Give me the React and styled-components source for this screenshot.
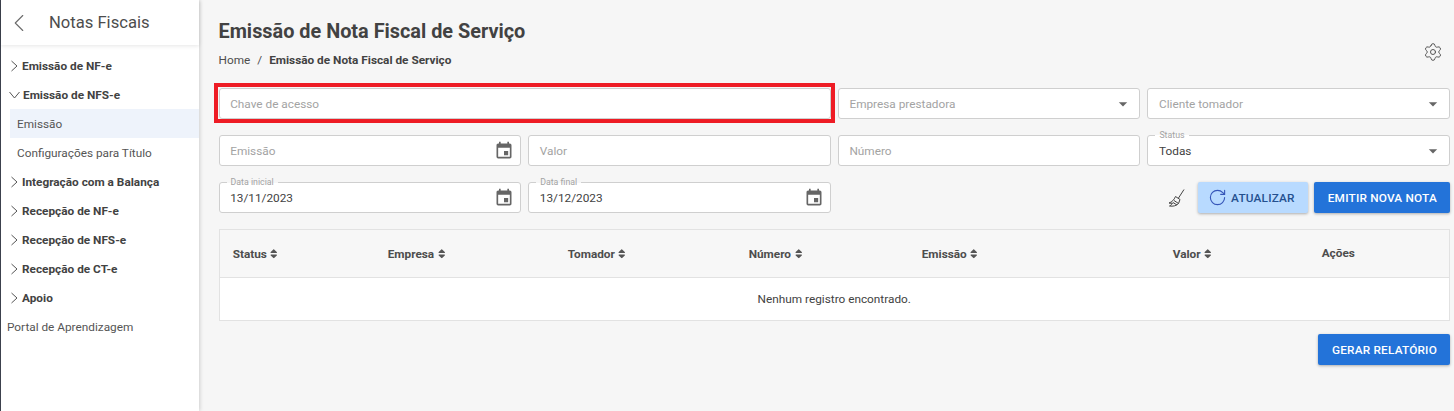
import React from "react"
import styled, { createGlobalStyle } from "styled-components"
import { MdEvent, MdArrowDropDown } from "react-icons/md"
import { FaSort } from "react-icons/fa"
import { ChevronLeft, RotateCw, Settings } from "lucide-react"

const GlobalStyle = createGlobalStyle`
  html, body {
    margin: 0;
    height: 100%;
    background: #f6f6f6;
    font-family: Roboto, "Liberation Sans", sans-serif;
    overflow: hidden;
  }
`

const Page = styled.div`
  display: flex;
  width: 1454px;
  height: 411px;
  border-left: 1px solid #3f4450;
  box-sizing: border-box;
`

const Sidebar = styled.aside`
  width: 198px;
  flex-shrink: 0;
  background: #fff;
  box-shadow: 1px 0 4px rgba(0, 0, 0, 0.16);
`

const SideHeader = styled.div`
  display: flex;
  align-items: center;
  height: 45px;
  padding-left: 3px;
  box-shadow: 0 1px 4px rgba(0, 0, 0, 0.1);
  color: #4d4d4d;
  svg {
    color: #6b6b6b;
  }
`

const SideTitle = styled.span`
  margin-left: 15px;
  font-size: 16.6px;
`

const SideMenu = styled.nav`
  display: flex;
  flex-direction: column;
  padding-top: 6px;
`

const Group = styled.div`
  display: flex;
  align-items: center;
  box-sizing: border-box;
  height: 29px;
  padding: 1px 0 0 8px;
  font-size: 11.8px;
  font-weight: 700;
  color: #424242;
  &:first-child {
    padding-top: 0;
  }
  svg {
    margin-right: ${(p) => (p.$open ? "3px" : "2px")};
    color: #555;
  }
`

const SubItem = styled.div`
  display: flex;
  align-items: center;
  box-sizing: border-box;
  height: 29px;
  margin-left: 9px;
  padding: 1px 0 0 7px;
  font-size: 11.8px;
  color: #555;
  background: ${(p) => (p.$active ? "#eef3fb" : "transparent")};
`

const PlainItem = styled.div`
  display: flex;
  align-items: center;
  box-sizing: border-box;
  height: 29px;
  padding: 1px 0 0 6px;
  font-size: 11.8px;
  color: #555;
`

const Main = styled.main`
  flex: 1;
  padding: 0 4px 0 19.5px;
  min-width: 0;
`

const TopBar = styled.div`
  display: flex;
  justify-content: space-between;
  align-items: flex-end;
  height: 88px;
  box-sizing: border-box;
  padding-bottom: 21px;
`

const TitleBlock = styled.div`
  display: flex;
  flex-direction: column;
  gap: 9px;
`

const Title = styled.h1`
  margin: 0;
  font-size: 19.87px;
  line-height: 24px;
  font-weight: 700;
  color: #424242;
`

const Breadcrumb = styled.div`
  font-size: 11.8px;
  line-height: 14px;
  color: #4d4d4d;
  b {
    font-weight: 700;
    color: #424242;
  }
  span {
    margin: 0 7px;
  }
`

const GearWrap = styled.div`
  display: flex;
  margin-right: 7px;
  margin-bottom: 5px;
  color: #555;
`

const FormGrid = styled.div`
  display: grid;
  grid-template-columns: repeat(4, 1fr);
  grid-auto-rows: 31px;
  column-gap: 7px;
  row-gap: 16px;
`

const Field = styled.div`
  position: relative;
  grid-column: ${(p) => (p.$wide ? "span 2" : "auto")};
  display: flex;
  align-items: center;
  justify-content: space-between;
  padding: 0 6px 0 10.7px;
  background: #fff;
  border: 1px solid #cfcfcf;
  border-radius: 3px;
  font-size: 11.8px;
  color: ${(p) => (p.$filled ? "#424242" : "#a3a3a3")};
  svg {
    color: #666;
    flex-shrink: 0;
  }
`

// red highlight drawn over the screenshot
const Marker = styled.div`
  position: absolute;
  top: -6px;
  left: -6px;
  right: -5px;
  bottom: -5px;
  border: 4px solid #ee1c25;
  pointer-events: none;
`

const FloatLabel = styled.label`
  position: absolute;
  top: -5px;
  left: 7px;
  padding: 0 4px;
  font-size: 8.8px;
  line-height: 9px;
  color: #a3a3a3;
  background: linear-gradient(#f6f6f6 50%, #fff 50%);
`

const Actions = styled.div`
  grid-column: 3 / 5;
  display: flex;
  align-items: center;
  justify-content: flex-end;
  gap: 6px;
`

const Button = styled.button`
  display: flex;
  align-items: center;
  gap: 4px;
  height: 31px;
  padding: ${(p) => (p.$light ? "0 13px 0 10px" : "0 13px 0 14px")};
  border: 0;
  border-radius: 2px;
  font-family: inherit;
  font-size: 11.8px;
  font-weight: 500;
  letter-spacing: 0.2px;
  color: ${(p) => (p.$light ? "#24508f" : "#fff")};
  background: ${(p) => (p.$light ? "#b8daff" : "#2373d9")};
  box-shadow: 0 1px 3px rgba(0, 0, 0, 0.3);
  svg {
    color: #3555b8;
  }
`

const BroomWrap = styled.div`
  display: flex;
  margin-right: 6px;
  color: #444;
`

const Table = styled.div`
  margin-top: 16px;
  background: #fff;
  border: 1px solid #e2e2e2;
`

const TableHead = styled.div`
  display: grid;
  grid-template-columns: 155px 180px 181px 173px 251px 149px 1fr;
  align-items: center;
  height: 47px;
  padding-left: 13.2px;
  background: #f7f7f7;
  border-bottom: 1px solid #e2e2e2;
`

const HeadCell = styled.div`
  display: flex;
  align-items: center;
  gap: 1.5px;
  padding-bottom: ${(p) => (p.$plain ? "2px" : "0")};
  font-size: 11.8px;
  font-weight: 700;
  color: #4d4d4d;
  svg {
    color: #555;
  }
`

const EmptyRow = styled.div`
  display: flex;
  align-items: center;
  justify-content: center;
  height: 42px;
  font-size: 11.8px;
  color: #424242;
`

const Footer = styled.div`
  display: flex;
  justify-content: flex-end;
  margin-top: 13px;
`

const Chevron = ({ open }) => (
  <svg width="11" height="12" viewBox="0 0 11 12" fill="none" stroke="currentColor" strokeWidth="1">
    {open ? <path d="M0.5 3 L5.5 9 L10.5 3" /> : <path d="M2.5 1 L8 6 L2.5 11" />}
  </svg>
)

const Broom = () => (
  <svg width="18" height="20" viewBox="0 0 18 20" fill="none" stroke="currentColor" strokeWidth="1">
    <path d="M16 1.5 L10.5 10" />
    <path d="M7.5 8.5 L12 11.5 L10.5 15.5 C8 18 5 18.5 1.5 18 C3.5 17 4 16 4.5 15 C3 15.5 2 15.5 1 15 C4 14 6 12 7.5 8.5 Z" />
    <path d="M6 12.5 L10.5 15.5" />
    <path d="M5 14.5 L9 17" />
  </svg>
)

const groupsTop = ["Integração com a Balança", "Recepção de NF-e", "Recepção de NFS-e", "Recepção de CT-e", "Apoio"]

const columns = [
  ["Status", true],
  ["Empresa", true],
  ["Tomador", true],
  ["Número", true],
  ["Emissão", true],
  ["Valor", true],
  ["Ações", false],
]

const ClosedGroup = ({ children }) => (
  <Group>
    <Chevron />
    {children}
  </Group>
)

export default function App() {
  return (
    <Page>
      <GlobalStyle />
      <Sidebar>
        <SideHeader>
          <ChevronLeft size={30} strokeWidth={0.9} />
          <SideTitle>Notas Fiscais</SideTitle>
        </SideHeader>
        <SideMenu>
          <ClosedGroup>Emissão de NF-e</ClosedGroup>
          <Group $open>
            <Chevron open />
            Emissão de NFS-e
          </Group>
          <SubItem $active>Emissão</SubItem>
          <SubItem>Configurações para Título</SubItem>
          {groupsTop.map((g) => (
            <ClosedGroup key={g}>{g}</ClosedGroup>
          ))}
          <PlainItem>Portal de Aprendizagem</PlainItem>
        </SideMenu>
      </Sidebar>
      <Main>
        <TopBar>
          <TitleBlock>
            <Title>Emissão de Nota Fiscal de Serviço</Title>
            <Breadcrumb>
              Home<span>/</span><b>Emissão de Nota Fiscal de Serviço</b>
            </Breadcrumb>
          </TitleBlock>
          <GearWrap>
            <Settings size={20} strokeWidth={1.2} />
          </GearWrap>
        </TopBar>
        <FormGrid>
          <Field $wide>
            Chave de acesso
            <Marker />
          </Field>
          <Field>Empresa prestadora<MdArrowDropDown size={20} /></Field>
          <Field>Cliente tomador<MdArrowDropDown size={20} /></Field>
          <Field>Emissão<MdEvent size={20} /></Field>
          <Field>Valor</Field>
          <Field>Número</Field>
          <Field $filled>
            <FloatLabel>Status</FloatLabel>
            Todas<MdArrowDropDown size={20} />
          </Field>
          <Field $filled>
            <FloatLabel>Data inicial</FloatLabel>
            13/11/2023<MdEvent size={20} />
          </Field>
          <Field $filled>
            <FloatLabel>Data final</FloatLabel>
            13/12/2023<MdEvent size={20} />
          </Field>
          <Actions>
            <BroomWrap><Broom /></BroomWrap>
            <Button $light>
              <RotateCw size={19} strokeWidth={1.4} />
              ATUALIZAR
            </Button>
            <Button>EMITIR NOVA NOTA</Button>
          </Actions>
        </FormGrid>
        <Table>
          <TableHead>
            {columns.map(([name, sortable]) => (
              <HeadCell key={name} $plain={!sortable}>
                {name}
                {sortable && <FaSort size={11.5} />}
              </HeadCell>
            ))}
          </TableHead>
          <EmptyRow>Nenhum registro encontrado.</EmptyRow>
        </Table>
        <Footer>
          <Button>GERAR RELATÓRIO</Button>
        </Footer>
      </Main>
    </Page>
  )
}
